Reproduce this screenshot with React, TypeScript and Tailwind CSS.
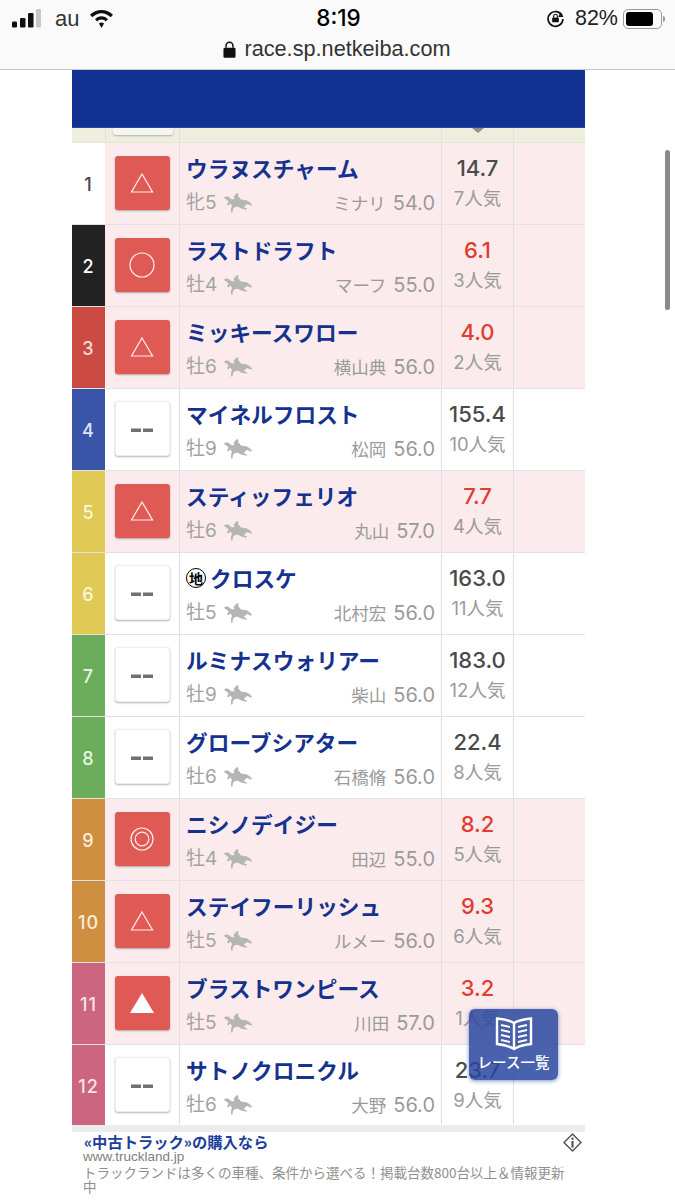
const JP = "font-['Noto_Sans_CJK_JP',sans-serif]";
const NUM = "font-['Inter','Noto_Sans_CJK_JP',sans-serif]";

type Mark = "tri" | "circle" | "double" | "solid" | "none";
type Row = { n: number; color: string; numText: string; mark: Mark; name: string; sex: string; jockey: string; weight: string; odds: string; pop: string; hot: boolean; chi?: boolean };

const rows: Row[] = [
  { n: 1, color: "bg-white", numText: "text-[#444444]", mark: "tri", name: "ウラヌスチャーム", sex: "牝5", jockey: "ミナリ", weight: "54.0", odds: "14.7", pop: "7人気", hot: false },
  { n: 2, color: "bg-[#222222]", numText: "text-white", mark: "circle", name: "ラストドラフト", sex: "牡4", jockey: "マーフ", weight: "55.0", odds: "6.1", pop: "3人気", hot: true },
  { n: 3, color: "bg-[#cb4a42]", numText: "text-[#f6dcd8]", mark: "tri", name: "ミッキースワロー", sex: "牡6", jockey: "横山典", weight: "56.0", odds: "4.0", pop: "2人気", hot: true },
  { n: 4, color: "bg-[#3a55a8]", numText: "text-[#dfe4f2]", mark: "none", name: "マイネルフロスト", sex: "牡9", jockey: "松岡", weight: "56.0", odds: "155.4", pop: "10人気", hot: false },
  { n: 5, color: "bg-[#e0c955]", numText: "text-[#fbf6dc]", mark: "tri", name: "スティッフェリオ", sex: "牡6", jockey: "丸山", weight: "57.0", odds: "7.7", pop: "4人気", hot: true },
  { n: 6, color: "bg-[#e0c955]", numText: "text-[#fbf6dc]", mark: "none", name: "クロスケ", chi: true, sex: "牡5", jockey: "北村宏", weight: "56.0", odds: "163.0", pop: "11人気", hot: false },
  { n: 7, color: "bg-[#6cad5c]", numText: "text-[#eaf5e6]", mark: "none", name: "ルミナスウォリアー", sex: "牡9", jockey: "柴山", weight: "56.0", odds: "183.0", pop: "12人気", hot: false },
  { n: 8, color: "bg-[#6cad5c]", numText: "text-[#eaf5e6]", mark: "none", name: "グローブシアター", sex: "牡6", jockey: "石橋脩", weight: "56.0", odds: "22.4", pop: "8人気", hot: false },
  { n: 9, color: "bg-[#cf8f40]", numText: "text-[#fbeeda]", mark: "double", name: "ニシノデイジー", sex: "牡4", jockey: "田辺", weight: "55.0", odds: "8.2", pop: "5人気", hot: true },
  { n: 10, color: "bg-[#cf8f40]", numText: "text-[#fbeeda]", mark: "tri", name: "ステイフーリッシュ", sex: "牡5", jockey: "ルメー", weight: "56.0", odds: "9.3", pop: "6人気", hot: true },
  { n: 11, color: "bg-[#cc6680]", numText: "text-[#f9e4ea]", mark: "solid", name: "ブラストワンピース", sex: "牡5", jockey: "川田", weight: "57.0", odds: "3.2", pop: "1人気", hot: true },
  { n: 12, color: "bg-[#cc6680]", numText: "text-[#f9e4ea]", mark: "none", name: "サトノクロニクル", sex: "牡6", jockey: "大野", weight: "56.0", odds: "23.7", pop: "9人気", hot: false },
];

function Horse() {
  return (
    <svg width="28" height="20" viewBox="0 0 28 20" fill="#b5b5b5">
      <path d="M0 5 C1.500 3 4 3 6.500 5.500 C8 6.500 9.500 6.500 10.500 6 L9.500 4 L12 1 C12.500 0 14.500 0 14.500 1.500 L14 3 L17 6.500 C18.500 6.800 20 6.800 21 7 C23 7.200 25 8.500 28 11.500 L27 12.800 L23.500 11 L21 12.500 C20.500 13.500 20 14 19.500 14 L23 15.500 L22.500 16.800 L17 15.500 L14 13.800 L11 14 L9 16 L8.500 19.500 L7 19.500 L7 15.500 L8 13 L6.500 10.500 L4 12.500 L3 11.500 L4.500 8.500 C3 6.500 1.500 6 0 5 Z" />
    </svg>
  );
}

function MarkBox({ mark }: { mark: Mark }) {
  if (mark === "none") {
    return (
      <div className="flex h-[55px] w-[55px] items-center justify-center rounded-[3px] border border-[#eeeeee] bg-white pt-[4px] shadow-[0_1px_2px_rgba(0,0,0,0.3)]">
        <svg width="22" height="5" viewBox="0 0 22 5">
          <rect x="0" y="0.500" width="10" height="3.500" fill="#707070" />
          <rect x="12" y="0.500" width="10" height="3.500" fill="#707070" />
        </svg>
      </div>
    );
  }
  return (
    <div className="flex h-[54px] w-[55px] items-center justify-center rounded-[3px] bg-[#e05a55] shadow-[0_1px_2px_rgba(0,0,0,0.3)]">
      <svg width="26" height="26" viewBox="0 0 26 26" fill="none" stroke="#fdeeee" strokeWidth="1.2">
        {mark === "tri" && <path d="M13 4 L23.500 22 L2.500 22 Z" />}
        {mark === "circle" && <circle cx="13" cy="13" r="12" />}
        {mark === "double" && (
          <>
            <circle cx="13" cy="13" r="11" />
            <circle cx="13" cy="13" r="6.800" />
          </>
        )}
        {mark === "solid" && <path d="M13 3 L25 23 L1 23 Z" fill="#ffffff" stroke="none" />}
      </svg>
    </div>
  );
}

function TableRow({ r }: { r: Row }) {
  const tint = r.mark === "none" ? "bg-white" : "bg-[#fbebec]";
  return (
    <div className="flex h-[82px] border-b border-[#e4e0e6]">
      <div className={`flex w-[33px] shrink-0 items-center justify-center pt-[2px] text-[18px] font-medium tracking-[1px] ${NUM} ${r.color} ${r.numText}`}>
        {r.n}
      </div>
      <div className={`flex w-[75px] shrink-0 items-center justify-center border-r border-[#dfdfe8] pb-[2px] ${tint}`}>
        <MarkBox mark={r.mark} />
      </div>
      <div className={`flex w-[262px] shrink-0 flex-col border-r border-[#dfdfe8] pl-[6px] pr-[6px] ${tint}`}>
        <div className={`mt-[8px] flex h-[34px] items-center text-[21.700px] font-bold leading-none text-[#15328f] ${JP}`}>
          {r.chi && (
            <span className="mr-[4px] flex h-[20px] w-[20px] items-center justify-center rounded-full border-[1.500px] border-black bg-white text-[14px] font-bold leading-none text-black">
              地
            </span>
          )}
          {r.name}
        </div>
        <div className={`mt-[4px] flex h-[28px] items-center text-[#a3a3a3] ${NUM}`}>
          <span className="w-[38px] text-[19px]">{r.sex}</span>
          <Horse />
          <span className="ml-auto flex items-center gap-[7px] text-[#9a9a9a]">
            <span className={`text-[17.500px] ${JP}`}>{r.jockey}</span>
            <span className="text-[20px]">{r.weight}</span>
          </span>
        </div>
      </div>
      <div className={`flex w-[72px] shrink-0 flex-col items-center border-r border-[#dfdfe8] ${tint} ${NUM}`}>
        <div className={`mt-[8px] h-[34px] text-[22px] font-medium leading-[34px] ${r.hot ? "text-[#e23c2e]" : "text-[#4a4a4a]"}`}>
          {r.odds}
        </div>
        <div className="text-[18.500px] leading-[26px] text-[#9a9a9a]">{r.pop}</div>
      </div>
      <div className={`flex-1 ${tint}`} />
    </div>
  );
}

export default function App() {
  return (
    <div className="relative h-[1200px] w-[675px] overflow-hidden bg-white">
      <header className="flex h-[70px] flex-col border-b border-[#c8c8c8] bg-[#fafafa] font-['Liberation_Sans',sans-serif] text-black">
        <div className="grid h-[37px] grid-cols-[1fr_auto_1fr] items-center pl-[12px] pr-[10px]">
          <div className="flex items-center">
            <svg width="29" height="19" viewBox="0 0 29 19">
              <rect x="0" y="12.500" width="5" height="6" rx="1.200" fill="#111" />
              <rect x="8" y="9" width="5.500" height="9.500" rx="1.200" fill="#111" />
              <rect x="16" y="4" width="5.500" height="14.500" rx="1.200" fill="#111" />
              <rect x="24" y="0" width="5" height="18.500" rx="1.200" fill="#c8c8c8" />
            </svg>
            <span className="ml-[14px] text-[22px] leading-none text-[#333]">au</span>
            <svg className="ml-[9px]" width="27" height="20" viewBox="0 0 24 20" fill="#111">
              <path d="M12 1 C7.500 1 3.500 2.800 0.500 5.800 L2.800 8.300 C5.200 6 8.500 4.300 12 4.300 C15.500 4.300 18.800 6 21.200 8.300 L23.500 5.800 C20.500 2.800 16.500 1 12 1 Z" />
              <path d="M12 7.300 C9.500 7.300 7.200 8.300 5.500 10.200 L7.800 12.500 C8.900 11.300 10.400 10.600 12 10.600 C13.600 10.600 15.100 11.300 16.200 12.500 L18.500 10.200 C16.800 8.300 14.500 7.300 12 7.300 Z" />
              <path d="M12 13.500 C11 13.500 10.200 13.800 9.500 14.500 L12 19 L14.500 14.500 C13.800 13.800 13 13.500 12 13.500 Z" />
            </svg>
          </div>
          <div className="font-['Inter',sans-serif] text-[22.500px] font-medium leading-none">8:19</div>
          <div className="flex items-center justify-end">
            <svg width="19" height="19" viewBox="0 0 20 20" fill="none" stroke="#111" strokeWidth="1.800">
              <path d="M17 7 A7.800 7.800 0 1 0 17.800 10.500" />
              <path d="M15 3.500 L18.500 8.500 L13 8.500 Z" fill="#111" stroke="none" />
              <rect x="6.500" y="9" width="7" height="5" rx="0.500" fill="#111" stroke="none" />
              <path d="M8 9 V7.500 A2 2 0 0 1 12 7.500 V9" strokeWidth="1.200" />
            </svg>
            <span className="ml-[10px] text-[21.500px] leading-none text-[#222]">82%</span>
            <div className="ml-[5px] flex h-[20px] w-[39px] items-center rounded-[5px] border-[1.500px] border-[#9a9a9a] p-[2px]">
              <div className="h-full w-[82%] rounded-[3px] bg-black" />
            </div>
            <div className="ml-[1px] h-[6px] w-[2px] rounded-r-sm bg-[#9a9a9a]" />
          </div>
        </div>
        <div className="flex items-center justify-center pr-[1px]">
          <svg width="13" height="17" viewBox="0 0 14 18" className="mr-[8px]">
            <rect x="0.500" y="7" width="13" height="11" rx="1.500" fill="#111" />
            <path d="M3.300 7 V4.800 A3.700 3.700 0 0 1 10.700 4.800 V7" fill="none" stroke="#111" strokeWidth="1.600" />
          </svg>
          <span className="text-[21.700px] leading-[24px] text-[#333]">race.sp.netkeiba.com</span>
        </div>
      </header>

      <main className="ml-[72px] w-[513px]">
        <div className="h-[58px] border-b border-[#2348a8] bg-[#113293]" />
        <div className="flex h-[15px] border-b border-[#e4e4dc] bg-[#eeeedd]">
          <div className="w-[33px] shrink-0" />
          <div className="flex w-[75px] shrink-0 justify-center border-x border-[#dfdfe8] pb-[7px]">
            <div className="h-[7px] w-[60px] rounded-b-[3px] bg-[#f5f5f2] shadow-[0_1px_2px_rgba(0,0,0,0.25)]" />
          </div>
          <div className="w-[261px] shrink-0" />
          <div className="flex w-[73px] shrink-0 justify-center border-x border-[#dfdfe8]">
            <svg width="12" height="5" viewBox="0 0 12 5"><path d="M0 0 H12 L6 5 Z" fill="#8f8f8f" /></svg>
          </div>
        </div>
        {rows.map((r) => (
          <TableRow key={r.n} r={r} />
        ))}
        <div className="relative -mt-[2px] h-[7px] bg-[#ececec]" />
        <div className="relative">
          <div className={`pl-[12px] text-[15.300px] font-bold leading-[18px] text-[#1c3f9c] ${JP}`}>«中古トラック»の購入なら</div>
          <div className="pl-[11px] font-['Liberation_Sans',sans-serif] text-[13.500px] leading-[14px] text-[#808080]">www.truckland.jp</div>
          <div className={`mt-[1px] pl-[11px] pr-[10px] text-[13.500px] leading-[14px] text-[#8f8f8f] ${JP}`}>
            トラックランドは多くの車種、条件から選べる！掲載台数800台以上＆情報更新中
          </div>
          <svg className="absolute right-[3px] top-[1px]" width="19" height="19" viewBox="0 0 19 19" fill="none" stroke="#555" strokeWidth="1.500">
            <path d="M9.500 1 L18 9.500 L9.500 18 L1 9.500 Z" strokeLinejoin="round" />
            <circle cx="9.500" cy="5.800" r="1.200" fill="#555" stroke="none" />
            <rect x="8.400" y="8" width="2.200" height="6.500" fill="#555" stroke="none" />
          </svg>
        </div>
      </main>

      <div className="absolute right-[5px] top-[150px] h-[160px] w-[5px] rounded-full bg-[#8a8a8a]" />

      <div className={`absolute left-[469px] top-[1009px] flex h-[71px] w-[89px] flex-col items-center rounded-[6px] bg-[#2a469f]/85 pt-[8px] text-white shadow-[0_1px_4px_rgba(40,70,170,0.6)] ${JP}`}>
        <svg width="38" height="34" viewBox="0 0 38 34" fill="none" stroke="#ffffff" strokeWidth="2">
          <path d="M19 6 C14 3 7 2 2 1.500 V27 C7 27.500 14 29 19 32 C24 29 31 27.500 36 27 V1.500 C31 2 24 3 19 6 Z" strokeWidth="2.400" />
          <path d="M19 6 V32" strokeWidth="2.400" />
          <path d="M6 8 L15 10 M6 13 L15 15 M6 18 L15 20 M6 23 L15 25 M32 8 L23 10 M32 13 L23 15 M32 18 L23 20 M32 23 L23 25" strokeWidth="1.800" />
        </svg>
        <span className="mt-[2px] text-[14.500px] font-medium leading-[18px]">レース一覧</span>
      </div>
    </div>
  );
}
